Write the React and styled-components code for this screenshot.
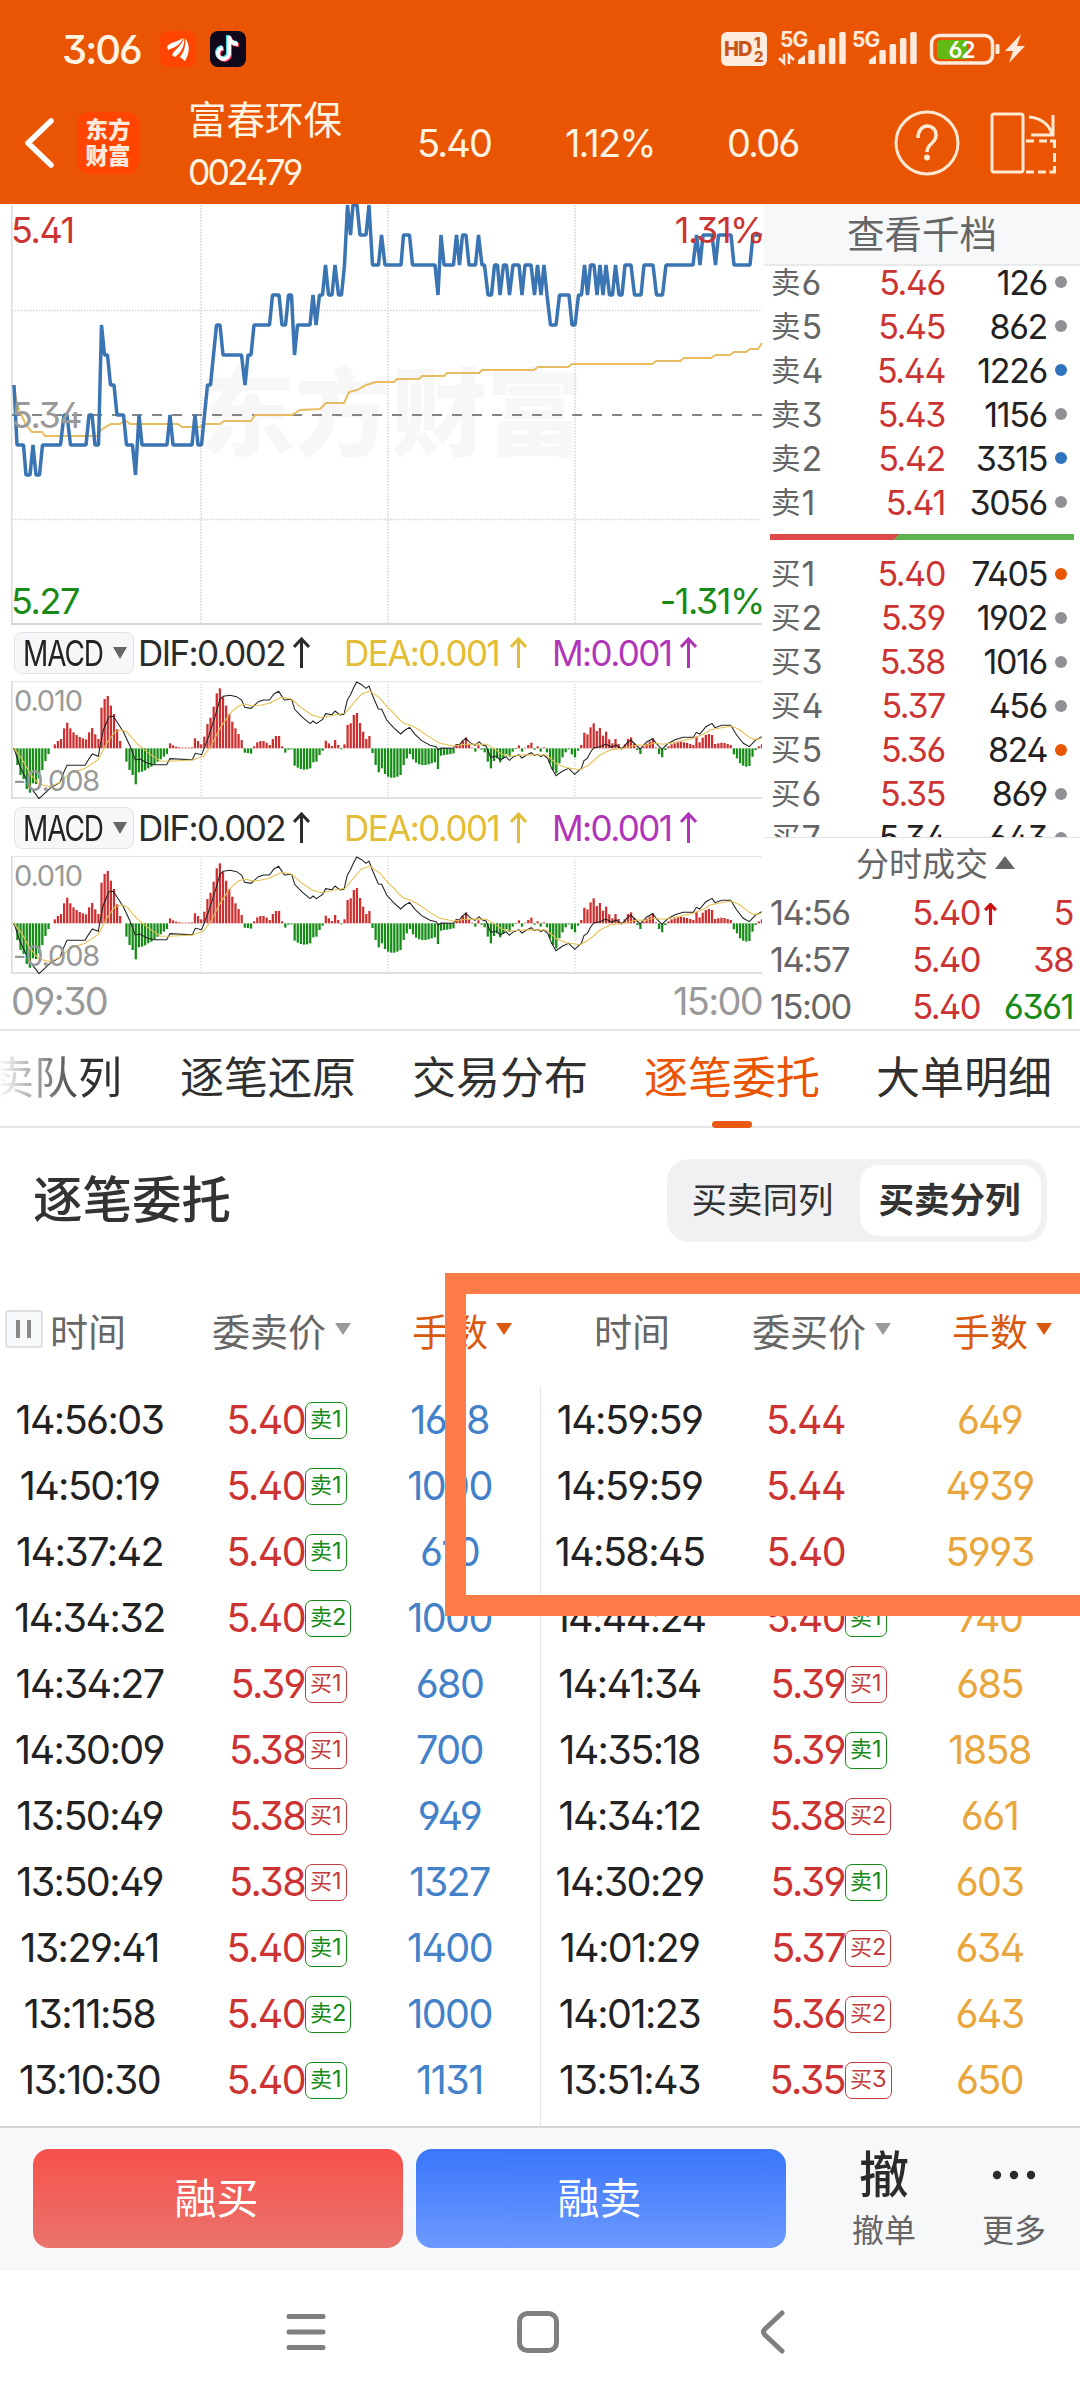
import React from "react";
import styled, { createGlobalStyle } from "styled-components";

const GlobalStyle = createGlobalStyle`
    * {
        box-sizing: border-box;
    }
    body {
        margin: 0;
        background: #fff;
        font-family: Inter, "Noto Sans CJK SC", sans-serif;
        font-feature-settings: "ss01", "cv09";
        color: #222;
    }
`;

const red = "#cc3333";
const green = "#178a17";
const orange = "#ea5504";

const Page = styled.div`
    position: relative;
    width: 1080px;
    height: 2400px;
    overflow: hidden;
    background: #fff;
    white-space: nowrap;
`;

/* ---------- top ---------- */

const Top = styled.header`
    height: 204px;
    background: ${orange};
    color: #fff3e2;
`;

const StatusBar = styled.div`
    height: 81px;
    padding: 17px 54px 0 62px;
    display: flex;
    align-items: center;
`;

const Clock = styled.div`
    width: 98px;
    font-size: 40px;
    font-weight: 500;
    letter-spacing: -0.05em;
`;

const AppBadge = styled.svg`
    width: 36px;
    height: 36px;
    margin-right: 14px;
    flex: none;
`;

const StatusIcons = styled.svg`
    width: 306px;
    height: 48px;
    margin-left: auto;
    flex: none;
`;

const TitleBar = styled.div`
    height: 123px;
    padding: 0 24px;
    display: flex;
    align-items: center;
`;

const BackIcon = styled.svg`
    width: 32px;
    height: 54px;
`;

const Logo = styled.div`
    width: 62px;
    height: 62px;
    margin-left: 21px;
    padding-top: 5px;
    border-radius: 12px;
    background: #ff4500;
    color: #ffe9dc;
    font-size: 22.5px;
    font-weight: 900;
    line-height: 26px;
    text-align: center;
`;

const Stock = styled.div`
    width: 229px;
    margin-left: 49px;
    padding-top: 7px;
`;

const StockName = styled.div`
    font-size: 38.5px;
    line-height: 54px;
`;

const StockCode = styled.div`
    font-size: 35.5px;
    line-height: 52px;
    letter-spacing: -0.08em;
`;

const Quote = styled.div`
    width: ${(props) => props.$w}px;
    font-size: 38px;
    letter-spacing: -0.05em;
`;

const TitleIcons = styled.svg`
    width: 170px;
    height: 70px;
    margin-left: auto;
`;

/* ---------- charts ---------- */

const Market = styled.section`
    display: flex;
    height: 827px;
    border-bottom: 2px solid #e6e6e6;
`;

const Charts = styled.div`
    width: 764px;
    padding-left: 11px;
`;

const ChartBox = styled.div`
    position: relative;
    width: 751px;
    height: ${(props) => props.$h}px;

    svg {
        display: block;
    }
`;

const ChartLabel = styled.span`
    position: absolute;
    top: ${(props) => props.$top}px;
    ${(props) => (props.$right ? "right: -2px;" : `left: ${props.$left || 0}px;`)}
    font-size: ${(props) => props.$size || 36}px;
    line-height: 40px;
    letter-spacing: -0.04em;
    color: ${(props) => props.$color || "#999"};
`;

const Watermark = styled.div`
    position: absolute;
    left: 188px;
    top: 153px;
    font-size: 96px;
    font-weight: 900;
    line-height: 112px;
    color: #f7f7f7;
`;

const IndicatorRow = styled.div`
    height: 57px;
    padding-left: 3px;
    display: flex;
    align-items: center;
    font-size: 35px;
    letter-spacing: -0.045em;
`;

const IndicatorPill = styled.div`
    width: 120px;
    height: 42px;
    padding-left: 8px;
    margin-right: 4px;
    border: 1px solid #e0e3e8;
    border-radius: 8px;
    background: #f6f7f9;
    display: flex;
    align-items: center;
    letter-spacing: -0.04em;
    flex: none;
`;

const IndicatorName = styled.span`
    width: 79px;
    transform: scaleX(0.8);
    transform-origin: left;
`;

const Caret = styled.i`
    width: 0;
    height: 0;
    margin-left: ${(props) => props.$gap || 0}px;
    border: ${(props) => props.$w / 2}px solid transparent;
    border-top: ${(props) => props.$h}px solid ${(props) => props.$color};
    border-bottom: 0;
    ${(props) => props.$up && "transform: rotate(180deg);"}
`;

const IndicatorValue = styled.div`
    width: ${(props) => props.$w}px;
    color: ${(props) => props.$color};
    display: flex;
    justify-content: space-between;
    align-items: center;
    margin-right: ${(props) => props.$gap || 0}px;
`;

const TimeAxis = styled.div`
    height: 57px;
    padding: 0 2px 3px 0;
    display: flex;
    justify-content: space-between;
    align-items: center;
    font-size: 38px;
    letter-spacing: -0.045em;
    color: #999;
`;

/* ---------- order book ---------- */

const Side = styled.div`
    width: 316px;
`;

const DepthLink = styled.div`
    height: 62px;
    border-bottom: 2px solid #e8e9eb;
    background: #f7f8fa;
    color: #666;
    font-size: 37.5px;
    line-height: 62px;
    text-align: center;
`;

const Depth = styled.div`
    height: 571px;
    overflow: hidden;
`;

const DepthList = styled.div`
    margin-top: ${(props) => props.$offset}px;
`;

const DepthRow = styled.div`
    height: 44px;
    padding-left: 7px;
    display: grid;
    grid-template-columns: 60px 114px 102px 20px;
    align-items: center;
    font-size: 34px;
    letter-spacing: -0.04em;
    text-align: right;
`;

const DepthName = styled.span`
    color: #666;
    text-align: left;
    letter-spacing: 0;

    b {
        font-size: 29.5px;
        font-weight: 400;
        margin-right: 1px;
        vertical-align: 2px;
        line-height: 1;
    }
`;

const Price = styled.span`
    color: ${(props) => props.$color || red};
`;

const Dot = styled.i`
    width: 12px;
    height: 12px;
    margin-left: auto;
    border-radius: 50%;
    background: ${(props) => props.$color};
`;

const RatioBar = styled.div`
    height: 6px;
    margin: 10px 6px 0;
    background: linear-gradient(135deg, #dc4a4a 91px, #5fb34e 92px);
`;

const TradesTitle = styled.div`
    height: 52px;
    border-top: 1px solid #e2e2e2;
    padding: 0 0 3px 92px;
    display: flex;
    align-items: center;
    color: #666;
    font-size: 33px;
`;

const TradeRow = styled.div`
    height: 47px;
    padding: 0 7px 0 7px;
    display: grid;
    grid-template-columns: 108px 101px 18px 1fr;
    align-items: center;
    font-size: 34.5px;
    letter-spacing: -0.045em;
    text-align: right;
    color: #666;

    span:first-child {
        margin-left: -1px;
        text-align: left;
    }
`;

/* ---------- tabs ---------- */

const Tabs = styled.nav`
    height: 97px;
    padding-left: 180px;
    display: flex;
    gap: 56px;
    border-bottom: 2px solid #e6e6e6;
    position: relative;
`;

const Tab = styled.div`
    flex: none;
    font-size: 44px;
    line-height: 94px;
    color: ${(props) => (props.$active ? orange : "#303030")};
    display: flex;
    flex-direction: column;
    align-items: center;

    &:first-child {
        margin-left: -190px;
        margin-right: 2px;
        background: linear-gradient(90deg, #fff 8px, #303030 95px);
        background-clip: text;
        -webkit-background-clip: text;
        color: transparent;
    }
`;

const TabLine = styled.i`
    width: 40px;
    height: 7px;
    margin-top: -4px;
    border-radius: 4px;
    background: #ea5a14;
    flex: none;
`;

const Heading = styled.div`
    height: 146px;
    padding: 0 33px 2px 33px;
    display: flex;
    align-items: center;
    justify-content: space-between;
    font-size: 49.5px;
    font-weight: 500;
    line-height: 60px;
    color: #333;
`;

const Toggle = styled.div`
    width: 380px;
    height: 83px;
    padding: 6px;
    border-radius: 22px;
    background: #f1f1f4;
    display: flex;
`;

const ToggleItem = styled.div`
    flex: ${(props) => (props.$on ? "0 0 181px" : "1")};
    padding-right: ${(props) => (props.$on ? 2 : 8)}px;
    border-radius: 19px;
    background: ${(props) => (props.$on ? "#fff" : "transparent")};
    font-size: 35.5px;
    font-weight: ${(props) => (props.$on ? 600 : 400)};
    line-height: 71px;
    text-align: center;
`;

/* ---------- order table ---------- */

const Orders = styled.section`
    height: 852px;
    display: flex;
`;

const Half = styled.div`
    width: 540px;
`;

const HeadRow = styled.div`
    height: 113px;
    padding-bottom: 3px;
    display: grid;
    grid-template-columns: 180px 204px 1fr;
    align-items: center;
    font-size: 38px;
    color: #666;
`;

const HeadCell = styled.div`
    display: flex;
    align-items: center;
    padding-left: ${(props) => props.$pad}px;
    color: ${(props) => props.$color || "#666"};
`;

const Pause = styled.svg`
    width: 38px;
    height: 38px;
    margin-right: 7px;
`;

const Rows = styled.div`
    height: 739px;
    ${(props) => props.$line && "box-shadow: inset 1px 0 #e6e6e6;"}
`;

const Row = styled.div`
    height: 66px;
    display: grid;
    grid-template-columns: 180px 181px 180px;
    align-items: center;
    font-size: 39.5px;
    letter-spacing: -0.04em;
`;

const Time = styled.span`
    padding-right: 1px;
    text-align: center;
`;

const PriceCell = styled.span`
    display: flex;
    align-items: center;
    color: ${red};

    b {
        width: 125px;
        font-weight: 400;
        text-align: right;
    }
`;

const Tag = styled.em`
    height: 37px;
    padding: 0 4px;
    border: 1.5px solid currentColor;
    border-radius: 7px;
    font-style: normal;
    font-size: 22px;
    line-height: 32px;
    letter-spacing: 0;
    color: ${(props) => (props.$buy ? "#c23c3c" : green)};

    span {
        font-size: 23.5px;
    }
`;

const Lots = styled.span`
    padding-right: 3px;
    text-align: center;
    color: ${(props) => props.$color};
`;

const Highlight = styled.div`
    position: absolute;
    left: 445px;
    top: 1273px;
    width: 680px;
    height: 343px;
    border: 21px solid #ff7c48;
`;

/* ---------- bottom ---------- */

const ActionBar = styled.footer`
    height: 145px;
    padding: 0 0 2px 33px;
    border-top: 2px solid #d3d6da;
    background: #f7f8fa;
    display: flex;
    align-items: center;
`;

const TradeButton = styled.button`
    flex: none;
    width: 370px;
    height: 99px;
    margin-right: 13px;
    padding: 0 9px 6px 6px;
    border: none;
    border-radius: 16px;
    color: #fff;
    font-family: inherit;
    font-size: 42px;
    background: ${(props) =>
        props.$sell
            ? "linear-gradient(#3a76fa, #6d99ff)"
            : "linear-gradient(#f6514a, #ea746d)"};
`;

const Action = styled.div`
    flex: none;
    width: 130px;
    margin-left: ${(props) => props.$shift}px;
    display: flex;
    flex-direction: column;
    align-items: center;
    font-size: 32px;
    line-height: 42px;
    color: #666;
`;

const ActionGlyph = styled.div`
    height: 58px;
    margin-bottom: 6px;
    font-size: 50px;
    font-weight: 500;
    line-height: 52px;
    color: #2b2b2b;
    display: flex;
    align-items: center;
`;

const NavBar = styled.div`
    height: 130px;
    padding: 0 288px 8px 284px;
    display: flex;
    align-items: center;
    justify-content: space-between;
`;

const NavIcon = styled.svg`
    width: 44px;
    height: 44px;
    fill: none;
    stroke: #808080;
    stroke-width: 5;
    stroke-linecap: round;
    stroke-linejoin: round;
`;

/* ---------- data ---------- */

// minute price: x, price
const priceLine = [
    [14, 35], [17, 33], [23.5, 33], [26, 32], [30, 32], [33, 33], [36, 32], [39.5, 32], [42.5, 33], [60.5, 33],
    [64, 34], [67, 34], [70.5, 33], [86, 33], [89, 34], [92, 34], [95, 33], [98.5, 33], [101.5, 37], [104.5, 36],
    [107.5, 36], [110.5, 35], [114, 35], [117, 34], [123.5, 34], [126.5, 33], [132.5, 33], [135.5, 32], [139, 34],
    [142, 33], [167, 33], [170, 34], [173, 33], [192, 33], [195, 34], [198, 33], [201.5, 33], [207.5, 35],
    [210.5, 35], [213.5, 36], [216.5, 37], [220, 37], [223, 36], [241.5, 36], [245, 35], [248, 36], [251, 36],
    [254, 37], [269.5, 37], [272.5, 38], [279, 38], [282, 37], [285.5, 37], [288.5, 38], [291.5, 38], [294.5, 36],
    [297.5, 37], [310, 37], [313, 38], [316, 37], [319.5, 38], [322.5, 38], [325.5, 39], [328.5, 38], [332, 38],
    [335, 39], [338.5, 38], [341.5, 38], [344.5, 39], [347.5, 41], [350.5, 40], [353, 41], [357, 41], [360, 40],
    [366, 40], [369, 41], [372.5, 39], [378.5, 39], [381.5, 40], [385, 39], [401, 39], [403.5, 40], [409.5, 40],
    [412.5, 39], [435, 39], [438, 38], [441, 40], [444, 39], [453.5, 39], [456.5, 40], [459.5, 39], [462.5, 40],
    [466, 40], [469, 39], [475.5, 39], [478.5, 40], [482, 39], [484.5, 39], [488, 38], [491.5, 38], [494.5, 39],
    [497.5, 39], [500, 38], [503.5, 39], [506.5, 39], [509.5, 38], [513, 39], [519, 39], [522, 38], [525, 39],
    [531, 39], [534.5, 38], [537.5, 39], [541, 38], [544, 39], [547, 38], [550.5, 37], [556, 37], [559.5, 38],
    [569, 38], [572, 37], [575, 37], [578.5, 38], [581.5, 38], [584.5, 39], [587.5, 38], [590.5, 39], [594, 39],
    [597, 38], [600, 39], [603, 38], [606, 39], [609.5, 38], [612.5, 38], [615.5, 39], [619, 38], [622, 38],
    [625, 39], [631, 39], [634.5, 38], [641, 38], [644, 39], [653, 39], [656.5, 38], [662.5, 38], [666, 39],
    [693, 39], [696.5, 40], [700, 39], [703, 40], [712, 40], [715.5, 39], [718.5, 40], [731, 40], [734, 39],
    [750, 39], [753, 40], [762, 40],
];

const averageLine =
    "14,385 17,405 20,412 26,425 32,432 42,432 45,436 97,436 101,430 107,426 111,424 120,424 125,420 130,424 178,424 182,427 200,427 204,424 220,424 224,421 251,421 255,415 292,415 300,410 320,409 326,403 344,403 349,392 357,390 366,385 376,382 394,382 397,379 419,379 422,376 444,376 447,373 479,373 482,370 534,370 538,367 568,367 572,364 652,364 656,361 680,361 684,358 711,358 716,355 730,355 734,352 746,352 750,349 758,349 762,343";

const macdBars = [
    -5, -50, -80, -92, -122, -133, -105, -107, -90, -65, -38, -17, 0, 12, 22, 28, 60, 77, 60, 48,
    40, 34, 30, 27, 48, 61, 42, 28, 122, 148, 157, 128, 103, 57, 22, 0, -40, -65, -80, -108,
    -72, -70, -66, -60, -55, -48, -40, -33, -25, -17, 15, 9, 5, 3, 2, 2, 2, 3, 30, 22,
    12, 35, 73, 92, 125, 165, 180, 153, 128, 103, 80, 60, 43, 25, -13, -14, -16, 6, 18, 22,
    22, 17, 10, 28, 37, 37, 6, -13, -4, -3, -52, -58, -62, -64, -63, -60, -42, -40, -20, -7,
    23, 15, 7, 25, 10, -3, 12, 70, 75, 100, 106, 76, 50, 28, 37, -14, -50, -72, -60, -77,
    -85, -88, -88, -85, -80, -50, -30, -17, -33, -43, -48, -50, -50, -48, -45, -42, -62, -22, -20, -19,
    -17, -15, 13, 10, 22, 33, 12, 2, -10, 9, -4, -12, -40, -60, -38, -30, -42, -30, -18, -25,
    -10, -2, 9, -10, 2, 10, 17, -4, 6, -10, 3, -12, -45, -65, -75, -45, -27, -12, -3, -18,
    -27, -7, 10, 47, 42, 63, 75, 52, 61, 38, 50, 27, 15, 28, 13, 3, 12, 28, 33, 14,
    -5, -17, 5, 14, 20, 30, 3, -17, -27, -5, 6, 12, 15, 18, 20, 18, 16, 13, 10, 35,
    18, 32, 40, 43, 40, 13, 15, 17, 16, 13, 10, -18, -30, -45, -52, -55, -53, -25, -5, 6, 12,
];

const difLine =
    "42,385 60,440 90,500 117,536 150,505 180,487 190,460 201,436 255,436 266,418 277,402 295,409 300,380 310,330 327,290 340,289 355,312 370,335 390,378 406,420 420,417 440,428 460,434 500,434 510,416 577,419 586,400 605,404 625,352 645,290 660,238 670,229 690,226 710,230 725,240 734,262 753,265 775,245 790,240 808,240 822,222 836,214 853,240 875,238 884,268 905,290 930,311 939,303 949,311 968,298 977,281 996,284 1005,273 1020,285 1032,283 1042,240 1051,225 1061,203 1070,186 1085,194 1098,205 1107,198 1117,225 1135,267 1145,268 1160,300 1180,322 1202,342 1215,330 1229,322 1245,343 1265,362 1290,376 1308,380 1315,390 1323,384 1360,385 1369,374 1379,374 1388,362 1398,355 1410,368 1425,376 1437,365 1446,374 1458,378 1472,412 1490,408 1500,420 1518,410 1528,421 1538,412 1556,404 1566,414 1580,405 1594,398 1603,407 1613,403 1623,410 1631,405 1643,415 1655,445 1668,467 1688,453 1706,445 1724,463 1744,445 1752,422 1762,415 1772,396 1781,384 1800,380 1818,372 1835,382 1848,375 1865,387 1880,370 1892,360 1908,375 1920,387 1940,366 1958,356 1972,374 1986,388 2002,372 2025,359 2050,352 2080,352 2089,337 2099,342 2118,320 2136,310 2145,323 2165,316 2192,316 2210,345 2230,370 2248,380 2265,362 2285,350";

const deaLine =
    "42,385 65,415 90,460 117,492 150,500 180,487 210,460 255,445 295,418 320,370 345,335 365,330 380,335 410,370 440,395 480,423 510,424 577,420 610,409 635,375 660,325 690,280 715,258 735,252 755,257 780,256 808,250 845,232 875,238 900,260 935,285 965,293 1000,286 1035,280 1060,250 1085,222 1110,213 1140,235 1163,262 1182,280 1200,300 1212,310 1230,315 1250,325 1290,352 1320,370 1360,378 1398,373 1425,372 1460,373 1485,388 1505,402 1530,408 1580,404 1640,405 1670,432 1700,443 1740,449 1765,436 1800,405 1830,390 1870,385 1910,375 1940,376 1960,369 1990,373 2020,368 2080,355 2110,343 2130,330 2160,324 2195,318 2220,330 2245,350 2260,358 2285,356";

const grey = "#8f8f96";
const blue = "#2f72bd";

const sells = [
    ["6", "5.46", "126", grey],
    ["5", "5.45", "862", grey],
    ["4", "5.44", "1226", blue],
    ["3", "5.43", "1156", grey],
    ["2", "5.42", "3315", blue],
    ["1", "5.41", "3056", grey],
];

const buys = [
    ["1", "5.40", "7405", orange],
    ["2", "5.39", "1902", grey],
    ["3", "5.38", "1016", grey],
    ["4", "5.37", "456", grey],
    ["5", "5.36", "824", orange],
    ["6", "5.35", "869", grey],
    ["7", "5.34", "643", grey],
];

const sellOrders = [
    ["14:56:03", "5.40", "卖1", "1698"],
    ["14:50:19", "5.40", "卖1", "1000"],
    ["14:37:42", "5.40", "卖1", "610"],
    ["14:34:32", "5.40", "卖2", "1000"],
    ["14:34:27", "5.39", "买1", "680"],
    ["14:30:09", "5.38", "买1", "700"],
    ["13:50:49", "5.38", "买1", "949"],
    ["13:50:49", "5.38", "买1", "1327"],
    ["13:29:41", "5.40", "卖1", "1400"],
    ["13:11:58", "5.40", "卖2", "1000"],
    ["13:10:30", "5.40", "卖1", "1131"],
];

const buyOrders = [
    ["14:59:59", "5.44", "", "649"],
    ["14:59:59", "5.44", "", "4939"],
    ["14:58:45", "5.40", "", "5993"],
    ["14:44:24", "5.40", "卖1", "740"],
    ["14:41:34", "5.39", "买1", "685"],
    ["14:35:18", "5.39", "卖1", "1858"],
    ["14:34:12", "5.38", "买2", "661"],
    ["14:30:29", "5.39", "卖1", "603"],
    ["14:01:29", "5.37", "买2", "634"],
    ["14:01:23", "5.36", "买2", "643"],
    ["13:51:43", "5.35", "买3", "650"],
];

/* ---------- parts ---------- */

function Signal({ x }) {
    return (
        <g fill="#ffeade">
            <path d={`M${x} 34v-4l7-5v9z`} />
            {[15, 21, 27, 33].map((h, i) => (
                <rect key={h} x={x + 10.3 * (i + 1)} y={35 - h} width="6.5" height={h - 1} rx="1.5" />
            ))}
        </g>
    );
}

function UpArrow({ w = 17, h = 31, stroke = 3 }) {
    return (
        <svg width={w} height={h} viewBox="0 0 17 31" fill="none" stroke="currentColor" strokeWidth={stroke}>
            <path d="M8.500 31V2M1 10l7.500-8 7.500 8" />
        </svg>
    );
}

function PriceChart() {
    const points = priceLine.map(([x, p]) => `${x},${415 - (p - 34) * 30}`).join(" ");
    return (
        <ChartBox $h={420}>
            <Watermark>东方财富</Watermark>
            <svg width="753" height="421" viewBox="11 204 753 421" style={{ position: "relative" }}>
                <g stroke="#d4d4d4" strokeWidth="1.500" strokeDasharray="1.500 1.500">
                    <path d="M201 205v418M388 205v418M575 205v418M12 310.500h750M12 519.500h750" />
                </g>
                <path d="M11.500 205v420" stroke="#dcdcdc" strokeWidth="2" />
                <path d="M11 624h751" stroke="#d6d6d6" strokeWidth="2" />
                <path d="M12 415h750" stroke="#858585" strokeWidth="2" strokeDasharray="10 10" />
                <polyline points={averageLine} fill="none" stroke="#e8bd62" strokeWidth="2" />
                <polyline points={points} fill="none" stroke="#3a74b3" strokeWidth="3.500" strokeLinejoin="bevel" />
            </svg>
            <ChartLabel $top={6} $color={red}>5.41</ChartLabel>
            <ChartLabel $top={191}>5.34</ChartLabel>
            <ChartLabel $top={377} $color={green}>5.27</ChartLabel>
            <ChartLabel $top={6} $right $color={red}>1.31%</ChartLabel>
            <ChartLabel $top={377} $right $color={green}>-1.31%</ChartLabel>
        </ChartBox>
    );
}

function Macd() {
    return (
        <>
            <IndicatorRow>
                <IndicatorPill>
                    <IndicatorName>MACD</IndicatorName>
                    <Caret $w={14} $h={12} $gap={11} $color="#666" />
                </IndicatorPill>
                <IndicatorValue $w={172} $gap={34} $color="#2b2b2b">DIF:0.002<UpArrow /></IndicatorValue>
                <IndicatorValue $w={183} $gap={25} $color="#e3bd35">DEA:0.001<UpArrow /></IndicatorValue>
                <IndicatorValue $w={145} $color="#b035b8">M:0.001<UpArrow /></IndicatorValue>
            </IndicatorRow>
            <ChartBox $h={118}>
                <svg width="751" height="118" viewBox="33 183 2253 354">
                    <path d="M603 183v354M1164 183v354M1725 183v354" stroke="#d4d4d4" strokeWidth="4" strokeDasharray="4 5" />
                    <path d="M33 185h2253" stroke="#e2e2e2" strokeWidth="3" />
                    <path d="M33 534h2253M35 183v354" stroke="#d8d8d8" strokeWidth="5" />
                    {macdBars.map((v, i) => (
                        <rect
                            key={i}
                            x={39.5 + i * 9.345}
                            y={v > 0 ? 385 - v : 385}
                            width="6.800"
                            height={Math.abs(v)}
                            fill={v > 0 ? "#cc3030" : "#168c17"}
                        />
                    ))}
                    <polyline points={difLine} fill="none" stroke="#222" strokeWidth="3.200" />
                    <polyline points={deaLine} fill="none" stroke="#e6c04c" strokeWidth="3.200" />
                </svg>
                <ChartLabel $top={0} $left={3} $size={29}>0.010</ChartLabel>
                <ChartLabel $top={80} $left={2} $size={29}>-0.008</ChartLabel>
            </ChartBox>
        </>
    );
}

function DepthRows({ name, rows }) {
    return rows.map(([n, price, lots, dot]) => (
        <DepthRow key={n}>
            <DepthName><b>{name}</b>{n}</DepthName>
            <Price $color={price === "5.34" ? "#222" : red}>{price}</Price>
            <span>{lots}</span>
            <Dot $color={dot} />
        </DepthRow>
    ));
}

function OrderRows({ rows, color, line }) {
    return (
        <Rows $line={line}>
            {rows.map(([time, price, tag, lots], i) => (
                <Row key={i}>
                    <Time>{time}</Time>
                    <PriceCell>
                        <b>{price}</b>
                        {tag && <Tag $buy={tag[0] === "买"}>{tag[0]}<span>{tag[1]}</span></Tag>}
                    </PriceCell>
                    <Lots $color={color}>{lots}</Lots>
                </Row>
            ))}
        </Rows>
    );
}

function App() {
    return (
        <Page>
            <GlobalStyle />
            <Top>
                <StatusBar>
                    <Clock>3:06</Clock>
                    <AppBadge viewBox="0 0 36 36">
                        <rect width="36" height="36" rx="8" fill="#ff4500" />
                        <path d="M7 16c2-5 9-4 16-9-2 6-7 9-15 12zM12 24c2-5 9-8 12-17 1 8-3 15-9 19zM20 26c4-5 6-11 5-19 6 8 4 16 0 23z" fill="#fff" />
                    </AppBadge>
                    <AppBadge viewBox="0 0 36 36">
                        <rect width="36" height="36" rx="8" fill="#10091a" />
                        <g fill="none" strokeWidth="4">
                            <path d="M19 5v18a5.500 5.500 0 1 1-6-6M19 6c1 5 4 7 9 7" stroke="#35e0e6" transform="translate(-1 -1)" />
                            <path d="M19 5v18a5.500 5.500 0 1 1-6-6M19 6c1 5 4 7 9 7" stroke="#f5305c" transform="translate(1 1)" />
                            <path d="M19 5v18a5.500 5.500 0 1 1-6-6M19 6c1 5 4 7 9 7" stroke="#fff" />
                        </g>
                    </AppBadge>
                    <StatusIcons viewBox="0 -5 306 48">
                        <rect x="1" y="2" width="46" height="34" rx="6" fill="#ffeade" />
                        <text x="4" y="26" fontSize="20" fontWeight="800" letterSpacing="-1" fill="#c8561a">HD</text>
                        <text x="34" y="17.500" fontSize="15" fontWeight="800" fill="#c8561a">1</text>
                        <text x="34" y="32" fontSize="15" fontWeight="800" fill="#c8561a">2</text>
                        <text x="60" y="17" fontSize="21" fontWeight="700" letterSpacing="-1" fill="#ffeade">5G</text>
                        <text x="132" y="17" fontSize="21" fontWeight="700" letterSpacing="-1" fill="#ffeade">5G</text>
                        <path d="M64 24v9l-5-5M69 34v-9l5 5" fill="none" stroke="#ffeade" strokeWidth="2.500" />
                        <Signal x={78} />
                        <Signal x={149} />
                        <rect x="211.500" y="5.500" width="61" height="27.500" rx="8" fill="none" stroke="#ffeade" strokeWidth="3.500" />
                        <path d="M221 10h26v19h-26a4 4 0 0 1-4-4V14a4 4 0 0 1 4-4" fill="#62bb12" />
                        <rect x="275.500" y="14" width="4" height="10" rx="1.500" fill="#ffeade" />
                        <text x="241.500" y="27.500" fontSize="23" fontWeight="600" letterSpacing="-1" textAnchor="middle" fill="#fff">62</text>
                        <path d="M301 4l-16 17h8l-4 12 16-17h-8z" fill="#ffeade" />
                    </StatusIcons>
                </StatusBar>
                <TitleBar>
                    <BackIcon viewBox="0 0 32 54" fill="none" stroke="#fff" strokeWidth="5.500" strokeLinecap="round" strokeLinejoin="round">
                        <path d="M27 5L4 27l23 22" />
                    </BackIcon>
                    <Logo>东方<br />财富</Logo>
                    <Stock>
                        <StockName>富春环保</StockName>
                        <StockCode>002479</StockCode>
                    </Stock>
                    <Quote $w={148}>5.40</Quote>
                    <Quote $w={162}>1.12%</Quote>
                    <Quote $w={90}>0.06</Quote>
                    <TitleIcons viewBox="0 0 170 70" fill="none" stroke="#ffe9d2" strokeWidth="3">
                        <circle cx="41" cy="35" r="31" />
                        <path d="M32 30c0-16 18-15 18-3 0 9-9 8-9 17" strokeWidth="3.500" />
                        <circle cx="41" cy="49.500" r="1.500" fill="#ffe9d2" />
                        <rect x="106" y="6" width="31" height="58" rx="2" />
                        <path d="M143 9c13 1 22 9 23 19M167 7v20h-22" />
                        <path d="M140 33h8M153 33h8M164 33h4.500v7M168.500 45v9M168.500 58v6h-5M160 64h-8M148 64h-8" />
                    </TitleIcons>
                </TitleBar>
            </Top>

            <Market>
                <Charts>
                    <PriceChart />
                    <Macd />
                    <Macd />
                    <TimeAxis>
                        <span>09:30</span>
                        <span>15:00</span>
                    </TimeAxis>
                </Charts>
                <Side>
                    <DepthLink>查看千档</DepthLink>
                    <Depth>
                        <DepthList $offset={-6}>
                            <DepthRows name="卖" rows={sells} />
                        </DepthList>
                        <RatioBar />
                        <DepthList $offset={11.5}>
                            <DepthRows name="买" rows={buys} />
                        </DepthList>
                    </Depth>
                    <TradesTitle>
                        分时成交
                        <Caret $w={20} $h={13} $gap={7} $color="#666" $up />
                    </TradesTitle>
                    <TradeRow>
                        <span>14:56</span>
                        <Price>5.40</Price>
                        <Price $color="#c11"><UpArrow w={15} h={22} stroke={4.5} /></Price>
                        <Price>5</Price>
                    </TradeRow>
                    <TradeRow>
                        <span>14:57</span>
                        <Price>5.40</Price>
                        <span />
                        <Price>38</Price>
                    </TradeRow>
                    <TradeRow>
                        <span>15:00</span>
                        <Price>5.40</Price>
                        <span />
                        <Price $color={green}>6361</Price>
                    </TradeRow>
                </Side>
            </Market>

            <Tabs>
                <Tab>卖队列</Tab>
                <Tab>逐笔还原</Tab>
                <Tab>交易分布</Tab>
                <Tab $active>逐笔委托<TabLine /></Tab>
                <Tab>大单明细</Tab>
            </Tabs>

            <Heading>
                逐笔委托
                <Toggle>
                    <ToggleItem>买卖同列</ToggleItem>
                    <ToggleItem $on>买卖分列</ToggleItem>
                </Toggle>
            </Heading>

            <Orders>
                <Half>
                    <HeadRow>
                        <HeadCell $pad={5}>
                            <Pause viewBox="0 0 38 38">
                                <rect x="1" y="1" width="36" height="36" rx="3" fill="#f6f8fa" stroke="#d4d9e0" strokeWidth="1.500" />
                                <path d="M13 10v18M24 10v18" stroke="#8a8a8a" strokeWidth="4" />
                            </Pause>
                            时间
                        </HeadCell>
                        <HeadCell $pad={32}>委卖价<Caret $w={17} $h={12} $gap={9} $color="#9a9a9e" /></HeadCell>
                        <HeadCell $pad={28} $color="#d9590f">手数<Caret $w={17} $h={12} $gap={8} $color="#d9590f" /></HeadCell>
                    </HeadRow>
                    <OrderRows rows={sellOrders} color="#4381c9" />
                </Half>
                <Half>
                    <HeadRow>
                        <HeadCell $pad={54}>时间</HeadCell>
                        <HeadCell $pad={32}>委买价<Caret $w={17} $h={12} $gap={9} $color="#9a9a9e" /></HeadCell>
                        <HeadCell $pad={28} $color="#d9590f">手数<Caret $w={17} $h={12} $gap={8} $color="#d9590f" /></HeadCell>
                    </HeadRow>
                    <OrderRows rows={buyOrders} color="#e8a63c" line />
                </Half>
            </Orders>

            <ActionBar>
                <TradeButton>融买</TradeButton>
                <TradeButton $sell>融卖</TradeButton>
                <Action $shift={20}>
                    <ActionGlyph>撤</ActionGlyph>
                    撤单
                </Action>
                <Action $shift={0}>
                    <ActionGlyph>
                        <svg width="44" height="10" fill="#2b2b2b">
                            <circle cx="5" cy="5" r="4.200" />
                            <circle cx="22" cy="5" r="4.200" />
                            <circle cx="39" cy="5" r="4.200" />
                        </svg>
                    </ActionGlyph>
                    更多
                </Action>
            </ActionBar>

            <NavBar>
                <NavIcon viewBox="0 0 44 44">
                    <path d="M5 6.500h34M5 22h34M5 37.500h34" />
                </NavIcon>
                <NavIcon viewBox="0 0 44 44">
                    <rect x="3.500" y="3.500" width="37" height="37" rx="8" />
                </NavIcon>
                <NavIcon viewBox="0 0 44 44">
                    <path d="M34 3L17 19q-3 3 0 6l17 16" />
                </NavIcon>
            </NavBar>

            <Highlight />
        </Page>
    );
}

export default App;
